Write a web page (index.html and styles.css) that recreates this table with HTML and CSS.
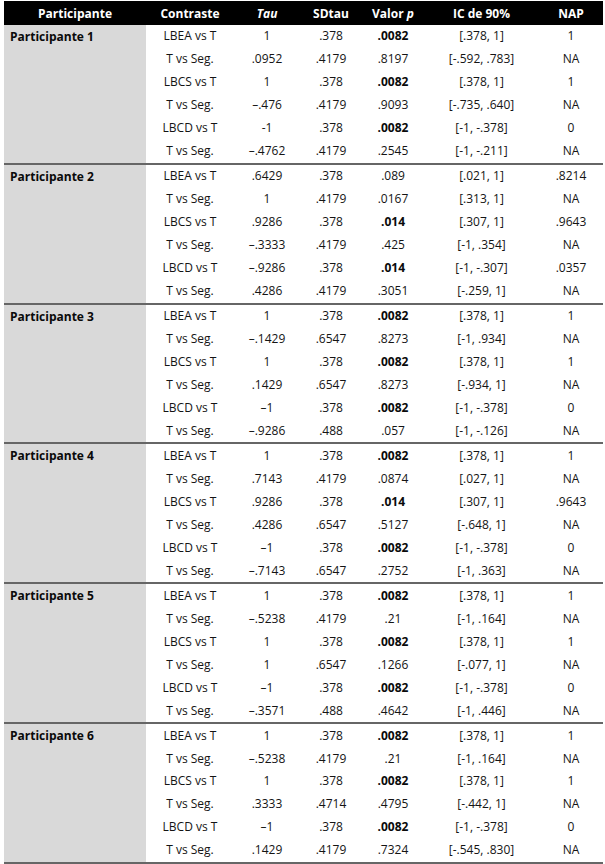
FILE: index.html
```html
<!DOCTYPE html>
<html lang="es">
<head>
<meta charset="utf-8">
<title>Resultados Tau-U</title>
<link rel="stylesheet" href="styles.css">
</head>
<body>
<table class="results">
  <colgroup>
    <col class="c-part"><col class="c-con"><col class="c-tau"><col class="c-sd"><col class="c-p"><col class="c-ic"><col class="c-nap">
  </colgroup>
  <thead>
    <tr><th>Participante</th><th>Contraste</th><th><i>Tau</i></th><th>SDtau</th><th>Valor <i>p</i></th><th>IC de 90%</th><th>NAP</th></tr>
  </thead>
  <tbody>
    <tr><td class="part" rowspan="6">Participante 1</td><td>LBEA vs T</td><td>1</td><td>.378</td><td class="sig">.0082</td><td>[.378, 1]</td><td>1</td></tr>
    <tr><td>T vs Seg.</td><td>.0952</td><td>.4179</td><td>.8197</td><td>[-.592, .783]</td><td>NA</td></tr>
    <tr><td>LBCS vs T</td><td>1</td><td>.378</td><td class="sig">.0082</td><td>[.378, 1]</td><td>1</td></tr>
    <tr><td>T vs Seg.</td><td>–.476</td><td>.4179</td><td>.9093</td><td>[-.735, .640]</td><td>NA</td></tr>
    <tr><td>LBCD vs T</td><td>-1</td><td>.378</td><td class="sig">.0082</td><td>[-1, -.378]</td><td>0</td></tr>
    <tr class="last"><td>T vs Seg.</td><td>–.4762</td><td>.4179</td><td>.2545</td><td>[-1, -.211]</td><td>NA</td></tr>
  </tbody>
  <tbody>
    <tr><td class="part" rowspan="6">Participante 2</td><td>LBEA vs T</td><td>.6429</td><td>.378</td><td>.089</td><td>[.021, 1]</td><td>.8214</td></tr>
    <tr><td>T vs Seg.</td><td>1</td><td>.4179</td><td>.0167</td><td>[.313, 1]</td><td>NA</td></tr>
    <tr><td>LBCS vs T</td><td>.9286</td><td>.378</td><td class="sig">.014</td><td>[.307, 1]</td><td>.9643</td></tr>
    <tr><td>T vs Seg.</td><td>–.3333</td><td>.4179</td><td>.425</td><td>[-1, .354]</td><td>NA</td></tr>
    <tr><td>LBCD vs T</td><td>–.9286</td><td>.378</td><td class="sig">.014</td><td>[-1, -.307]</td><td>.0357</td></tr>
    <tr class="last"><td>T vs Seg.</td><td>.4286</td><td>.4179</td><td>.3051</td><td>[-.259, 1]</td><td>NA</td></tr>
  </tbody>
  <tbody>
    <tr><td class="part" rowspan="6">Participante 3</td><td>LBEA vs T</td><td>1</td><td>.378</td><td class="sig">.0082</td><td>[.378, 1]</td><td>1</td></tr>
    <tr><td>T vs Seg.</td><td>–.1429</td><td>.6547</td><td>.8273</td><td>[-1, .934]</td><td>NA</td></tr>
    <tr><td>LBCS vs T</td><td>1</td><td>.378</td><td class="sig">.0082</td><td>[.378, 1]</td><td>1</td></tr>
    <tr><td>T vs Seg.</td><td>.1429</td><td>.6547</td><td>.8273</td><td>[-.934, 1]</td><td>NA</td></tr>
    <tr><td>LBCD vs T</td><td>–1</td><td>.378</td><td class="sig">.0082</td><td>[-1, -.378]</td><td>0</td></tr>
    <tr class="last"><td>T vs Seg.</td><td>–.9286</td><td>.488</td><td>.057</td><td>[-1, -.126]</td><td>NA</td></tr>
  </tbody>
  <tbody>
    <tr><td class="part" rowspan="6">Participante 4</td><td>LBEA vs T</td><td>1</td><td>.378</td><td class="sig">.0082</td><td>[.378, 1]</td><td>1</td></tr>
    <tr><td>T vs Seg.</td><td>.7143</td><td>.4179</td><td>.0874</td><td>[.027, 1]</td><td>NA</td></tr>
    <tr><td>LBCS vs T</td><td>.9286</td><td>.378</td><td class="sig">.014</td><td>[.307, 1]</td><td>.9643</td></tr>
    <tr><td>T vs Seg.</td><td>.4286</td><td>.6547</td><td>.5127</td><td>[-.648, 1]</td><td>NA</td></tr>
    <tr><td>LBCD vs T</td><td>–1</td><td>.378</td><td class="sig">.0082</td><td>[-1, -.378]</td><td>0</td></tr>
    <tr class="last"><td>T vs Seg.</td><td>–.7143</td><td>.6547</td><td>.2752</td><td>[-1, .363]</td><td>NA</td></tr>
  </tbody>
  <tbody>
    <tr><td class="part" rowspan="6">Participante 5</td><td>LBEA vs T</td><td>1</td><td>.378</td><td class="sig">.0082</td><td>[.378, 1]</td><td>1</td></tr>
    <tr><td>T vs Seg.</td><td>–.5238</td><td>.4179</td><td>.21</td><td>[-1, .164]</td><td>NA</td></tr>
    <tr><td>LBCS vs T</td><td>1</td><td>.378</td><td class="sig">.0082</td><td>[.378, 1]</td><td>1</td></tr>
    <tr><td>T vs Seg.</td><td>1</td><td>.6547</td><td>.1266</td><td>[-.077, 1]</td><td>NA</td></tr>
    <tr><td>LBCD vs T</td><td>–1</td><td>.378</td><td class="sig">.0082</td><td>[-1, -.378]</td><td>0</td></tr>
    <tr class="last"><td>T vs Seg.</td><td>–.3571</td><td>.488</td><td>.4642</td><td>[-1, .446]</td><td>NA</td></tr>
  </tbody>
  <tbody>
    <tr><td class="part" rowspan="6">Participante 6</td><td>LBEA vs T</td><td>1</td><td>.378</td><td class="sig">.0082</td><td>[.378, 1]</td><td>1</td></tr>
    <tr><td>T vs Seg.</td><td>–.5238</td><td>.4179</td><td>.21</td><td>[-1, .164]</td><td>NA</td></tr>
    <tr><td>LBCS vs T</td><td>1</td><td>.378</td><td class="sig">.0082</td><td>[.378, 1]</td><td>1</td></tr>
    <tr><td>T vs Seg.</td><td>.3333</td><td>.4714</td><td>.4795</td><td>[-.442, 1]</td><td>NA</td></tr>
    <tr><td>LBCD vs T</td><td>–1</td><td>.378</td><td class="sig">.0082</td><td>[-1, -.378]</td><td>0</td></tr>
    <tr class="last"><td>T vs Seg.</td><td>.1429</td><td>.4179</td><td>.7324</td><td>[-.545, .830]</td><td>NA</td></tr>
  </tbody>
</table>
</body>
</html>
```

FILE: styles.css
```css
html, body {
  margin: 0;
  padding: 0;
  background: #ffffff;
}

body {
  font-family: "Open Sans", "Noto Sans", "Liberation Sans", sans-serif;
  font-size: 12px;
  color: #141414;
}

.results {
  margin: 1px 0 0 4px;
  width: 599px;
  table-layout: fixed;
  border-collapse: collapse;
  border-spacing: 0;
}

.c-part { width: 142px; }
.c-con { width: 88px; }
.c-tau { width: 66px; }
.c-sd { width: 62px; }
.c-p { width: 62px; }
.c-ic { width: 115px; }
.c-nap { width: 64px; }

.results th {
  background: #000000;
  color: #ffffff;
  font-weight: 700;
  height: 24px;
  padding: 0;
  line-height: 23px;
  text-align: center;
}

.results td {
  height: 22.97px;
  padding: 0;
  line-height: 22px;
  text-align: center;
  white-space: nowrap;
}

.results td.part {
  background: #d9d9d9;
  text-align: left;
  vertical-align: top;
  padding-left: 6px;
  padding-top: 1px;
  font-weight: 700;
  color: #0a0a0a;
}

.results td.sig {
  font-weight: 700;
  color: #0a0a0a;
}

.results tr.last td,
.results td.part {
  border-bottom: 2px solid #666666;
}
```
